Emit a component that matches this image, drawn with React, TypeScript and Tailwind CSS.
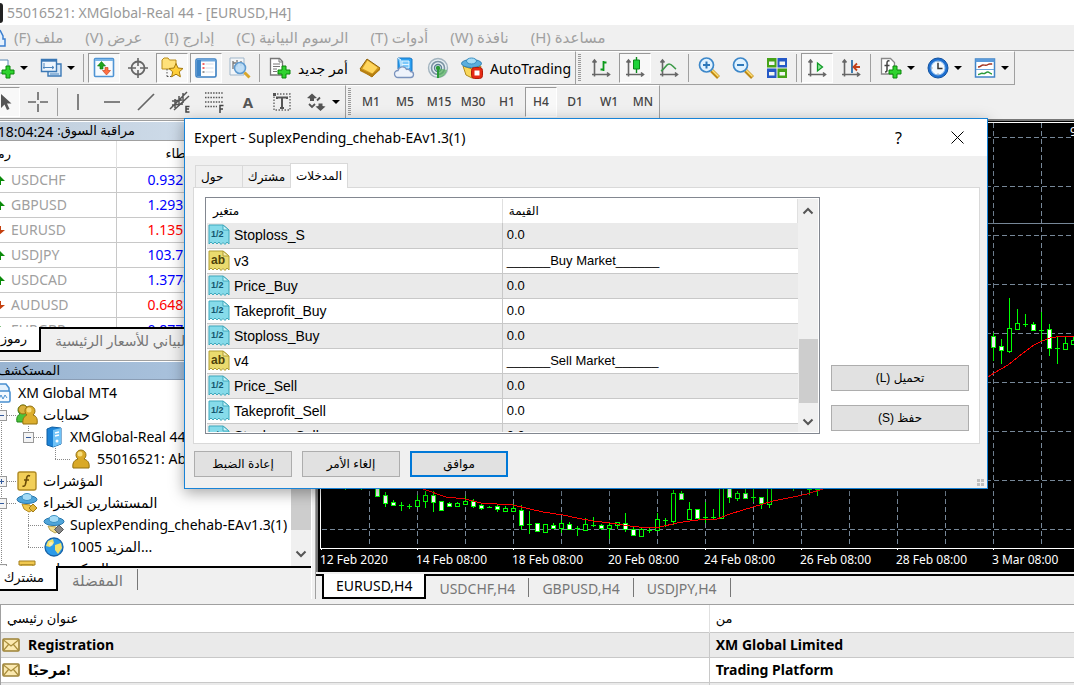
import type { ReactNode } from "react";
import clsx from "clsx";

const ui = "font-['Noto_Sans','DejaVu_Sans',sans-serif]";
const sans = "font-['Liberation_Sans','DejaVu_Sans',sans-serif]";

/* ---------- icons ---------- */

function Svg({ children, size = 22 }: { children: ReactNode; size?: number }) {
  return (
    <svg width={size} height={size} viewBox="0 0 22 22" fill="none" className="shrink-0" aria-hidden>
      {children}
    </svg>
  );
}

const greenPlus = (
  <path d="M13 9h4v4h4v4h-4v4h-4v-4H9v-4h4z" fill="#2fd32f" stroke="#0b860b" />
);

const axes = (
  <path d="M4.500 3v16.500M2 17.500h17M2.500 5.500l2-2.500 2 2.500M17 15.500l2.500 2-2.500 2" stroke="#666" strokeWidth="1.600" />
);

const icons = {
  newChart: (
    <Svg>
      <path d="M1 3h14v13H1z" fill="#fff" stroke="#5b89b5" />
      {greenPlus}
    </Svg>
  ),
  windows: (
    <Svg>
      <path d="M8 7h13v12H8z" fill="#d7e8f8" stroke="#3b78b5" strokeWidth="1.400" />
      <path d="M1.500 2.500h15v12h-15z" fill="#eef6fe" stroke="#3b78b5" strokeWidth="1.400" />
      <path d="M1.500 3.500h15" stroke="#3b78b5" strokeWidth="2.400" />
      <path d="M4 6v6M3 10.500h11M12 9l2 1.500-2 1.500M10 17h9" stroke="#4e86bd" />
    </Svg>
  ),
  market: (
    <Svg>
      <rect x="1.500" y="1.500" width="19" height="18" rx="1" fill="#f7fbff" stroke="#4f94d4" strokeWidth="1.600" />
      <path d="M2 3h18" stroke="#7bb6e8" strokeWidth="2" />
      <path d="M8.500 4.500l4 4.500h-2.500v3H7V9H4.500z" fill="#1fa41f" stroke="#0b7a0b" strokeWidth=".6" />
      <path d="M13.500 18l-4-4.500H12v-3h3v3h2.500z" fill="#ff7044" stroke="#c23b12" strokeWidth=".6" />
    </Svg>
  ),
  crosshair: (
    <Svg>
      <circle cx="11" cy="11" r="6.500" stroke="#666" strokeWidth="1.800" />
      <path d="M11 1v8M11 13v8M1 11h8M13 11h8" stroke="#666" strokeWidth="1.600" />
    </Svg>
  ),
  favorites: (
    <Svg>
      <path d="M1 3l2-2h4l1.500 2H15v9H1z" fill="#ffe17a" stroke="#b88c1a" />
      <path d="M6 12v8M6 19.500h5" stroke="#555" strokeDasharray="1.500 1.500" />
      <path d="M15 6.500l2 4.500 5 .5-3.700 3.300 1.100 5-4.400-2.600-4.400 2.600 1.100-5L8 11.500l5-.5z" fill="#ffcf3a" stroke="#a67a0c" />
    </Svg>
  ),
  terminal: (
    <Svg>
      <rect x="1" y="2" width="20" height="18" rx="1.500" fill="#fff" stroke="#3a7fc2" strokeWidth="1.600" />
      <path d="M1.500 3.500h19" stroke="#6fa9de" strokeWidth="2" />
      <path d="M4 3v16" stroke="#3f86c8" strokeWidth="4" />
      <path d="M7.500 7h2M7.500 11h2" stroke="#e33" strokeWidth="1.400" />
      <path d="M10.500 7h8M10.500 11h8M10.500 15h8" stroke="#d2dbe8" />
      <path d="M7.500 15h2" stroke="#333" />
    </Svg>
  ),
  tester: (
    <Svg>
      <path d="M1 1h14v17H1z" fill="#f4f6f8" stroke="#9fb6ca" />
      <path d="M4 4v8M4 6h3M8 3v7M12 4v5" stroke="#777" strokeWidth="1.300" />
      <circle cx="11" cy="11" r="5.500" fill="#b9dcf6" fillOpacity=".9" stroke="#5f9bd0" strokeWidth="1.600" />
      <path d="M15.500 15.500l5 5" stroke="#d9a62a" strokeWidth="3" />
    </Svg>
  ),
  order: (
    <Svg>
      <path d="M1.500 1.500h9l3 3V18h-12z" fill="#fff" stroke="#777" strokeWidth="1.300" />
      <path d="M10 1.500v3.500h3.500M4 7h7M4 9.500h7M4 12h4M4 14.500h4" stroke="#777" />
      {greenPlus}
    </Svg>
  ),
  gold: (
    <Svg>
      <path d="M1 12L8 2l13 9-8 9z" fill="#d29a1c" stroke="#8f620a" />
      <path d="M3.500 11.500L8.500 3.500 18.500 10.500l-5 6z" fill="#ffd65e" />
      <path d="M1 12l12 5 8-6v2l-8 7-12-6z" fill="#b67f12" />
    </Svg>
  ),
  cloud: (
    <Svg>
      <path d="M5 1h12l2 1v12H7l-2-2z" fill="#2ba0f2" stroke="#1676c4" />
      <path d="M9 4h7v7H9zM5 1l3 2v9" fill="#7cc8fb" stroke="#e4f5ff" />
      <path d="M9 7.500h7" stroke="#e4f5ff" />
      <path d="M5 20.500a3.500 3.500 0 010-7 4.500 4.500 0 018.500-1 3 3 0 014 2 3 3 0 010 6z" fill="#eef3fb" stroke="#7a93bd" strokeWidth="1.300" />
    </Svg>
  ),
  signal: (
    <Svg>
      <circle cx="11" cy="11" r="9.500" fill="#e6eef2" stroke="#a3b4bf" strokeWidth="1.400" />
      <circle cx="11" cy="11" r="6.500" stroke="#7c94a3" strokeWidth="1.600" />
      <circle cx="11" cy="11" r="3.500" stroke="#5c7f95" strokeWidth="1.400" />
      <path d="M11 11v10a10 10 0 009-8z" fill="#53b25a" fillOpacity=".7" />
      <circle cx="11" cy="11" r="2.200" fill="#2a9a38" />
      <path d="M11 11v10" stroke="#2a9a38" strokeWidth="2" />
    </Svg>
  ),
  auto: (
    <Svg>
      <path d="M2 9l9 3 9-3-3 10-6 2-6-3z" fill="#f9d75a" stroke="#b18a1c" />
      <ellipse cx="10.500" cy="6.500" rx="10" ry="4" fill="#5aaede" stroke="#2d7fb3" />
      <ellipse cx="10.500" cy="4" rx="5" ry="3" fill="#a5dcf7" stroke="#3a8fc2" />
      <rect x="10.500" y="10.500" width="11" height="11" rx="3" fill="#e52a14" stroke="#b01c0a" />
      <path d="M13.500 13.500h5v5h-5z" fill="#fff" />
    </Svg>
  ),
  bars: (
    <Svg>
      {axes}
      <path d="M13.500 4v10M10.500 12.500h3M13.500 5.500h3" stroke="#0a9a1a" strokeWidth="1.800" />
    </Svg>
  ),
  candles: (
    <Svg>
      {axes}
      <path d="M12.500 0v16" stroke="#0a8a1a" strokeWidth="1.400" />
      <path d="M9.500 3h6v9h-6z" fill="#1fd33a" stroke="#0a8a1a" />
    </Svg>
  ),
  line: (
    <Svg>
      {axes}
      <path d="M3 14c4-2 5-7 8-7s4 3 7 5" stroke="#3c9a48" strokeWidth="1.600" />
    </Svg>
  ),
  zoomIn: (
    <Svg>
      <path d="M13.500 13.500l7 7" stroke="#c08b16" strokeWidth="4" />
      <path d="M14 13l6.500 6.500" stroke="#ffe07a" strokeWidth="1.600" />
      <circle cx="8.500" cy="8" r="7" fill="#e0f2ff" stroke="#3c87c9" strokeWidth="1.700" />
      <path d="M8.500 4.500v7M5 8h7" stroke="#2d78ba" strokeWidth="2" />
    </Svg>
  ),
  zoomOut: (
    <Svg>
      <path d="M13.500 13.500l7 7" stroke="#c08b16" strokeWidth="4" />
      <path d="M14 13l6.500 6.500" stroke="#ffe07a" strokeWidth="1.600" />
      <circle cx="8.500" cy="8" r="7" fill="#e0f2ff" stroke="#3c87c9" strokeWidth="1.700" />
      <path d="M5 8h7" stroke="#2d78ba" strokeWidth="2" />
    </Svg>
  ),
  tile: (
    <Svg>
      <path d="M1 1h9.500v9.500H1zM11.500 11.500H21V21h-9.500z" fill="#46a318" />
      <path d="M11.500 1H21v9.500h-9.500zM1 11.500h9.500V21H1z" fill="#2559c7" />
      <path d="M3 4.500h5.500V8H3zM13.500 4.500H19V8h-5.500zM3 15h5.500v3.500H3zM13.500 15H19v3.500h-5.500z" fill="#f2f6f2" />
    </Svg>
  ),
  scroll: (
    <Svg>
      {axes}
      <path d="M11.500 6v8l5-4z" fill="#8de89a" stroke="#109a26" strokeWidth="1.300" />
    </Svg>
  ),
  shift: (
    <Svg>
      {axes}
      <path d="M12 3v13" stroke="#2b6ea8" strokeWidth="1.800" />
      <path d="M20 10h-6M17 6.500L13.500 10l3.500 3.500" stroke="#c2401a" strokeWidth="1.800" />
    </Svg>
  ),
  indicator: (
    <Svg>
      <path d="M1.500 1.500h9l4 4V17h-13z" fill="#fff" stroke="#888" strokeWidth="1.300" />
      <path d="M9.500 4c-2-.5-2.500.5-2.500 2v7c0 1.500-.5 2-2 2M4.500 8.500h5" stroke="#444" strokeWidth="1.500" />
      {greenPlus}
    </Svg>
  ),
  clock: (
    <Svg>
      <circle cx="11" cy="11" r="10" fill="#1e6fd0" stroke="#12529f" />
      <circle cx="11" cy="11" r="7" fill="#f3f8fd" stroke="#8bbdf0" />
      <path d="M11 6v5.500h4.500" stroke="#333" strokeWidth="1.500" />
      <path d="M11 4.500v1M11 16.500v1M4.500 11h1" stroke="#777" />
    </Svg>
  ),
  template: (
    <Svg>
      <rect x="1.500" y="2" width="19" height="18" fill="#fff" stroke="#4285c7" strokeWidth="1.500" />
      <path d="M1.500 3.500h19" stroke="#5b9bdb" strokeWidth="3" />
      <path d="M2 12.500h18" stroke="#6da5dd" />
      <path d="M4 10c3 0 3-2 5-2s3 1 5-.5 3 .5 4-1" stroke="#a33420" strokeWidth="1.400" />
      <path d="M4 17.500c2 0 3-2 5-1s3-2 5-1.500 2 2 4 2" stroke="#2b9a3c" strokeWidth="1.400" />
    </Svg>
  ),
  cursor: (
    <Svg>
      <path d="M8 3v14l3.500-3.500L14 19l2.500-1-2.500-5.500h4.500z" fill="#555" />
    </Svg>
  ),
  cross: (
    <Svg>
      <path d="M11 1v8M11 13v8M1 11h8M13 11h8" stroke="#666" strokeWidth="1.600" />
    </Svg>
  ),
  vline: (
    <Svg>
      <path d="M11 3v16" stroke="#666" strokeWidth="1.600" />
    </Svg>
  ),
  hline: (
    <Svg>
      <path d="M3 11h16" stroke="#666" strokeWidth="1.600" />
    </Svg>
  ),
  trend: (
    <Svg>
      <path d="M3 19L19 3" stroke="#666" strokeWidth="1.700" />
    </Svg>
  ),
  channel: (
    <Svg>
      <path d="M1 18L18 1M5 19L20 5M3 10l10-1M3 14l11-1M6 8v9M10 5v10M14 2v10" stroke="#555" strokeWidth="1.500" />
      <path d="M20.500 15.500H17v5.500h3.500M17 18h3" stroke="#444" strokeWidth="1.500" />
    </Svg>
  ),
  fibo: (
    <Svg>
      <path d="M2 2h18M2 6.500h18M2 11h18M2 15.500h12" stroke="#555" strokeWidth="1.600" strokeDasharray="1.500 1.200" />
      <path d="M20.500 14.500H17V22M17 18h3" stroke="#444" strokeWidth="1.500" />
    </Svg>
  ),
  textLabel: (
    <Svg>
      <path d="M3 3h16v16H3z" stroke="#666" strokeWidth="1.400" strokeDasharray="1.500 1.500" />
      <path d="M6 8V6.500h10V8M11 7v10M9 17h4" stroke="#555" strokeWidth="2" />
      <path d="M2 2h3v3H2z" fill="#555" />
    </Svg>
  ),
  arrows: (
    <Svg>
      <path d="M7 2.500l5 4.500-3 .5v2.500H5V7.500L2 7zM15.500 20l-5-4.500 3-.5v-2.500h4V15l3 .5z" fill="#555" />
      <path d="M4 13l3 3 3-3M12 9.500l3-3" stroke="#555" strokeWidth="1.800" />
    </Svg>
  ),
  person: (
    <Svg>
      <path d="M3 20c-1-6 2-8 5-9a5 5 0 116 0c3 1 6 3 5 9z" fill="#d9a928" stroke="#92700f" />
      <circle cx="10" cy="6" r="2.500" fill="#f6dc7a" />
    </Svg>
  ),
  people: (
    <Svg>
      <path d="M1 18c-1-5 1-7 3-8a5 5 0 116 0c3 1 4 3 4 8z" fill="#4bc23a" stroke="#21851a" />
      <circle cx="7" cy="5.500" r="4.500" fill="#d9b13d" stroke="#92700f" />
      <path d="M7 20c-1-6 2-8 4-9a5 5 0 116 0c3 1 5 3 4 9z" fill="#dcae2e" stroke="#92700f" />
      <circle cx="13" cy="6" r="2.500" fill="#f6dc7a" />
    </Svg>
  ),
  server: (
    <Svg>
      <path d="M4 3l5-2 9 1v16l-8 3-6-2z" fill="#1d83d6" stroke="#0f5fa3" />
      <path d="M10 4l8-2v16l-8 3z" fill="#6fc2f7" />
      <path d="M12 7l4-1M12 10l4-1" stroke="#fff" strokeWidth="1.500" />
      <circle cx="14" cy="15" r="1.500" fill="#fff" />
    </Svg>
  ),
  func: (
    <Svg>
      <rect x="2" y="2" width="18" height="18" rx="2" fill="#f2cf58" stroke="#b08a22" strokeWidth="1.400" />
      <path d="M14 6c-2-1-3 0-3.300 2L9.500 14c-.3 2-1.500 2.500-3 2M8 10h5" stroke="#6b4c07" strokeWidth="1.600" />
    </Svg>
  ),
  expert: (
    <Svg>
      <path d="M6 12l8 1 3 5-4 2-5-3z" fill="#f1c84c" stroke="#b58b20" />
      <path d="M17 12l4 4-4 4-4-4z" fill="#e3b93c" stroke="#a37c14" />
      <ellipse cx="11" cy="7.500" rx="10" ry="4" fill="#4fa5da" stroke="#2a78ad" />
      <ellipse cx="11" cy="5" rx="5" ry="3.500" fill="#a5dcf7" stroke="#3a8fc2" />
    </Svg>
  ),
  expertOff: (
    <Svg>
      <path d="M5 12l8 1 3 4-4 2-5-3z" fill="#f1dc8c" stroke="#b5a050" />
      <path d="M16 11l4.500 4.500L16 20l-4.500-4.500z" fill="#858585" stroke="#555" />
      <ellipse cx="11" cy="7.500" rx="10" ry="4" fill="#4fa5da" stroke="#2a78ad" />
      <ellipse cx="11" cy="5" rx="5" ry="3.500" fill="#a5dcf7" stroke="#3a8fc2" />
    </Svg>
  ),
  globe: (
    <Svg>
      <circle cx="11" cy="11" r="9" fill="#2d9be8" stroke="#1763a8" strokeWidth="1.300" />
      <path d="M5 5l5-2 1 4-4 4-4-1zM12 9l6-2 1 5-4 6-3-4z" fill="#f5e26a" />
      <circle cx="8" cy="8" r="2" fill="#fff" fillOpacity=".5" />
    </Svg>
  ),
  script: (
    <Svg>
      <path d="M3 3h16v4H3z" fill="#f0c850" stroke="#a37f1d" />
      <path d="M5 7h12v13H5z" fill="#f8e08a" stroke="#a37f1d" />
    </Svg>
  ),
  platform: (
    <Svg>
      <path d="M5 6V2h11l3 4v6" stroke="#4a90d0" strokeWidth="1.600" fill="#e4f1fc" />
      <rect x="2" y="9" width="18" height="11" rx="1.500" fill="#f4faff" stroke="#4a90d0" strokeWidth="1.600" />
      <path d="M5 17l2-4 2 4 2-4 2 4 2-4 2 3" stroke="#4a90d0" />
    </Svg>
  ),
  mail: (
    <svg width="18" height="14" viewBox="0 0 18 14" fill="none" aria-hidden>
      <rect x="1" y="1" width="16" height="12" rx="1" fill="#fbe9b0" stroke="#9c8136" strokeWidth="1.600" />
      <path d="M1.500 2l7.500 6 7.500-6M1.500 12.500l5-6M16.500 12.500l-5-6" stroke="#a98e3c" strokeWidth="1.200" />
    </svg>
  ),
};

function ParamIcon({ kind }: { kind: "num" | "str" }) {
  const num = kind === "num";
  return (
    <span className="relative block h-[22px] w-[22px]">
      <svg width="22" height="22" viewBox="0 0 22 22" aria-hidden>
        <path
          d="M1 1h14l6 5v14l-2-2-2 2.500-2-2-2 2-2-2.500-2 2-2-2-2 2-2-2-2 2z"
          fill={num ? "#86dbea" : "#eadb6e"}
          stroke={num ? "#3fa9bd" : "#b09e34"}
        />
        <path d="M15 1v5h6z" fill={num ? "#c9f1f8" : "#f7eeb0"} stroke={num ? "#3fa9bd" : "#b09e34"} />
      </svg>
      <span
        className={clsx(
          "absolute top-0 left-[3px] leading-5",
          sans,
          num ? "text-[9px] font-bold text-[#14566e]" : "text-[12px] font-bold text-[#4f430b]"
        )}
      >
        {num ? "1/2" : "ab"}
      </span>
    </span>
  );
}

function Chevron({ up }: { up?: boolean }) {
  return (
    <svg width="12" height="8" viewBox="0 0 12 8" fill="none" aria-hidden>
      <path d={up ? "M1.500 6.500L6 2l4.500 4.500" : "M1.500 1.500L6 6l4.500-4.500"} stroke="#555" strokeWidth="2" />
    </svg>
  );
}

/* ---------- toolbars ---------- */

type ToolProps = { label: string; pressed?: boolean; drop?: boolean; text?: string; children?: ReactNode };

function Tool({ label, pressed, drop, text, children }: ToolProps) {
  return (
    <button
      aria-label={label}
      aria-pressed={pressed}
      className={clsx(
        "flex h-[30px] shrink-0 items-center border",
        pressed ? "border-t-[#999] border-r-white border-b-white border-l-[#999] bg-[#f8f8f8]" : "border-transparent"
      )}
    >
      <span className="flex w-[30px] shrink-0 items-center justify-center">{children}</span>
      {text && <span className="px-[3px] text-[14px] whitespace-nowrap text-black">{text}</span>}
      {drop && <span className="mr-1 ml-px border-x-4 border-t-4 border-x-transparent border-t-black" />}
    </button>
  );
}

const Sep = () => <span className="mr-0.5 ml-px h-7 w-px shrink-0 bg-[#a0a0a0]" />;

const Grip = () => (
  <span className="mr-0.5 h-7 w-[3px] shrink-0 bg-[repeating-linear-gradient(#9a9a9a_0_1px,#f0f0f0_1px_2px)]" />
);

function Strip({ children, className }: { children: ReactNode; className?: string }) {
  return (
    <div
      className={clsx(
        "flex h-[34px] shrink-0 items-center gap-0.5 border-t border-r border-b border-t-white border-r-[#a0a0a0] border-b-[#a0a0a0]",
        className
      )}
    >
      {children}
    </div>
  );
}

const menus = [
  "ملف (F)",
  "عرض (V)",
  "إدارج (I)",
  "الرسوم البيانية (C)",
  "أدوات (T)",
  "نافذة (W)",
  "مساعدة (H)",
];

const periods = ["M1", "M5", "M15", "M30", "H1", "H4", "D1", "W1", "MN"];

function Toolbars() {
  return (
    <>
      <div className="flex shrink-0 overflow-hidden border-t border-[#a0a0a0]">
        <Strip className="-ml-3">
          <Tool label="New chart" drop>{icons.newChart}</Tool>
          <Tool label="Profiles" drop>{icons.windows}</Tool>
          <Sep />
          <Tool label="Market watch" pressed>{icons.market}</Tool>
          <Tool label="Data window">{icons.crosshair}</Tool>
          <Tool label="Navigator" pressed>{icons.favorites}</Tool>
          <Tool label="Terminal" pressed>{icons.terminal}</Tool>
          <Tool label="Strategy tester">{icons.tester}</Tool>
          <Sep />
          <Tool label="أمر جديد" text="أمر جديد">{icons.order}</Tool>
          <Tool label="Editor">{icons.gold}</Tool>
          <Tool label="Hosting">{icons.cloud}</Tool>
          <Tool label="Signals">{icons.signal}</Tool>
          <Tool label="AutoTrading" text="AutoTrading">{icons.auto}</Tool>
        </Strip>
        <Strip className="pl-0.5">
          <Grip />
          <Tool label="Bar chart">{icons.bars}</Tool>
          <Tool label="Candlesticks" pressed>{icons.candles}</Tool>
          <Tool label="Line chart">{icons.line}</Tool>
          <Sep />
          <Tool label="Zoom in">{icons.zoomIn}</Tool>
          <Tool label="Zoom out">{icons.zoomOut}</Tool>
          <Tool label="Tile windows">{icons.tile}</Tool>
          <Sep />
          <Tool label="Auto scroll" pressed>{icons.scroll}</Tool>
          <Tool label="Chart shift">{icons.shift}</Tool>
          <Sep />
          <Tool label="Indicators" drop>{icons.indicator}</Tool>
          <Tool label="Periods" drop>{icons.clock}</Tool>
          <Tool label="Templates" drop>{icons.template}</Tool>
        </Strip>
      </div>
      <div className="flex shrink-0 overflow-hidden">
        <Strip className="-ml-3">
          <Tool label="Cursor" pressed>{icons.cursor}</Tool>
          <Tool label="Crosshair">{icons.cross}</Tool>
          <Sep />
          <Tool label="Vertical line">{icons.vline}</Tool>
          <Tool label="Horizontal line">{icons.hline}</Tool>
          <Tool label="Trendline">{icons.trend}</Tool>
          <Tool label="Channel">{icons.channel}</Tool>
          <Tool label="Fibonacci">{icons.fibo}</Tool>
          <Tool label="Text"><span className="text-[15px] font-bold text-[#555]">A</span></Tool>
          <Tool label="Text label">{icons.textLabel}</Tool>
          <Tool label="Arrows" drop>{icons.arrows}</Tool>
        </Strip>
        <Strip className="pl-0.5">
          <Grip />
          {periods.map((p) => (
            <Tool key={p} label={p} pressed={p === "H4"}>
              <span className="text-[12px] font-medium text-[#444]">{p}</span>
            </Tool>
          ))}
        </Strip>
      </div>
    </>
  );
}

/* ---------- left dock ---------- */

const quotes = [
  { symbol: "USDCHF", bid: "0.9326", up: true },
  { symbol: "GBPUSD", bid: "1.2935", up: true },
  { symbol: "EURUSD", bid: "1.1351", up: false },
  { symbol: "USDJPY", bid: "103.76", up: true },
  { symbol: "USDCAD", bid: "1.3774", up: true },
  { symbol: "AUDUSD", bid: "0.6482", up: false },
  { symbol: "EURGBP", bid: "0.8773", up: true },
];

function MarketWatch() {
  return (
    <section className="mt-px flex h-[238px] shrink-0 flex-col border-t border-[#a0a0a0]">
      <div className="flex h-5 items-center overflow-hidden border-y border-[#a0a0a0] border-t-white bg-linear-to-r from-[#bfcddb] to-[#d7e4f2]">
        <h2 dir="rtl" className="flex w-[135px] items-center gap-1 text-[13px] whitespace-nowrap text-black">
          <span>مراقبة السوق:</span>
          <span className="text-[14px]">18:04:24</span>
        </h2>
      </div>
      <div className="h-[186px] overflow-hidden bg-white">
        <table className="w-full table-fixed border-collapse text-left">
          <thead>
            <tr className="h-[26px] border-b border-[#c8c8c8] text-[13px]">
              <th className="w-[116px] border-r border-[#e0e0e0] font-normal">
                <span dir="rtl" className="flex w-[11px] whitespace-nowrap">رمز</span>
              </th>
              <th className="pl-[49px] font-normal">عطاء</th>
            </tr>
          </thead>
          <tbody>
            {quotes.map((q) => (
              <tr key={q.symbol} className="h-[25px] border-b border-[#c8c8c8] text-[14px] leading-5">
                <td className="border-r border-[#c8c8c8] p-0 text-[#a0a0a0]">
                  <span className="flex items-center gap-[6px]">
                    <svg width="5" height="12" viewBox="0 0 5 12" aria-hidden>
                      {q.up ? (
                        <path d="M-1 1l6 6H1v4h-2z" fill="#0a8a0a" />
                      ) : (
                        <path d="M-1 11l6-5H1V2h-2z" fill="#c4400f" />
                      )}
                    </svg>
                    {q.symbol}
                  </span>
                </td>
                <td className={clsx("p-0 pl-[31px]", q.up ? "text-[#0000ff]" : "text-[#ff0000]")}>{q.bid}</td>
              </tr>
            ))}
          </tbody>
        </table>
      </div>
      <div className="flex h-[25px] border-t-2 border-black" role="tablist">
        <button role="tab" aria-selected className="-mt-0.5 flex w-[41px] items-center justify-end border-r-2 border-b-2 border-black bg-white pr-3 text-[13px] whitespace-nowrap">
          رموز
        </button>
        <button role="tab" className="min-w-0 flex-1 overflow-hidden pl-[14px] text-left text-[14px] whitespace-nowrap text-[#777]">
          الرسم البياني للأسعار الرئيسية
        </button>
      </div>
    </section>
  );
}

function Guide({ level, toggle, down }: { level: number; toggle?: "+" | "-"; down?: boolean }) {
  const widths = [0, 16, 43, 70];
  const w = widths[level];
  const x = w - 15;
  return (
    <svg width={w} height="22" className="shrink-0 overflow-hidden" fill="none" aria-hidden>
      <path d={`M${x + 0.5} 0V${down ? 22 : 11}M${x} 11.500h15`} stroke="#888" strokeDasharray="1 1" />
      {level > 1 && <path d="M1.500 0v22" stroke="#888" strokeDasharray="1 1" />}
      {toggle && (
        <>
          <rect x={x - 4.5} y="6.500" width="10" height="10" fill="#f4f4f4" stroke="#999" />
          <path d={`M${x - 2} 11.500h5${toggle === "+" ? `M${x + 0.5} 9v5` : ""}`} stroke="#335a9c" />
        </>
      )}
    </svg>
  );
}

const tree = [
  { level: 1, icon: icons.people, text: "حسابات", toggle: "-" as const, down: true },
  { level: 2, icon: icons.server, text: "XMGlobal-Real 44", toggle: "-" as const },
  { level: 3, icon: icons.person, text: "55016521: Abdo" },
  { level: 1, icon: icons.func, text: "المؤشرات", toggle: "+" as const, down: true },
  { level: 1, icon: icons.expert, text: "المستشارين الخبراء", toggle: "-" as const, down: true },
  { level: 2, icon: icons.expertOff, text: "SuplexPending_chehab-EAv1.3(1)", down: true },
  { level: 2, icon: icons.globe, text: "1005 المزيد..." },
  { level: 1, icon: icons.script, text: "السكريبتات", toggle: "+" as const },
];

function Navigator() {
  return (
    <section className="mt-0.5 flex h-[237px] shrink-0 flex-col border-t border-[#a0a0a0]">
      <div className="flex h-[19px] items-center overflow-hidden border-y border-t-white border-b-[#8a9db5] bg-linear-to-r from-[#99b4d1] to-[#b4cbe4]">
        <h2 dir="rtl" className="flex w-[60px] text-[13px] whitespace-nowrap text-black">المستكشف</h2>
      </div>
      <div className="flex h-[186px] overflow-hidden bg-white">
        <ul className="min-w-0 flex-1 overflow-hidden pt-0.5 text-[14px] leading-[22px] whitespace-nowrap">
          <li className="flex h-[22px] items-center gap-[6px]">
            <span className="-ml-[10px]">{icons.platform}</span>XM Global MT4
          </li>
          {tree.map((n) => (
            <li key={n.text} className="flex h-[22px] items-center">
              <Guide level={n.level} toggle={n.toggle} down={n.down} />
              {n.icon}
              <span className="pl-[5px]">{n.text}</span>
            </li>
          ))}
        </ul>
        <div className="flex w-5 flex-col items-center justify-end bg-[#f0f0f0]">
          <span className="w-full flex-1 bg-[#cdcdcd]" />
          <span className="flex h-9 items-end pb-2"><Chevron /></span>
        </div>
      </div>
      <div className="flex h-[25px] border-t-2 border-black" role="tablist">
        <button role="tab" aria-selected className="-mt-0.5 flex w-[58px] items-center justify-end border-r-2 border-b-2 border-black bg-white pr-3 text-[13px] whitespace-nowrap">
          مشترك
        </button>
        <button role="tab" className="my-px border-r border-[#777] pr-[14px] pl-[14px] text-[15px] whitespace-nowrap text-[#777]">
          المفضلة
        </button>
      </div>
    </section>
  );
}

/* ---------- chart ---------- */

// x, high, low, body top, body bottom, kind (w filled, g hollow, d doji)
type Candle = [number, number, number, number, number, "w" | "g" | "d"];

const candles: Candle[] = [
  [345, 480, 490, 480, 486, "g"], [361, 480, 490, 480, 486, "w"],
  [377, 480, 496, 482, 496, "w"], [385, 492, 507, 495, 503, "w"], [393, 500, 506, 502, 505, "w"],
  [401, 502, 511, 505, 505, "d"], [409, 504, 509, 506, 506, "d"], [417, 495, 507, 500, 506, "g"],
  [425, 491, 508, 495, 501, "g"], [433, 491, 512, 495, 502, "w"], [441, 501, 510, 501, 510, "w"],
  [449, 502, 507, 503, 506, "w"], [457, 502, 506, 503, 506, "g"], [465, 496, 505, 501, 504, "g"],
  [473, 499, 508, 501, 506, "w"], [481, 503, 510, 505, 508, "w"], [489, 506, 508, 507, 507, "d"],
  [497, 504, 512, 506, 509, "w"], [505, 506, 512, 508, 511, "g"], [513, 504, 512, 508, 511, "g"],
  [521, 505, 530, 510, 525, "w"], [529, 511, 534, 524, 524, "d"], [537, 523, 531, 523, 531, "w"],
  [545, 524, 532, 524, 532, "g"], [553, 523, 529, 525, 528, "w"], [561, 520, 533, 523, 528, "g"],
  [569, 522, 529, 524, 529, "w"], [577, 526, 536, 528, 528, "d"], [585, 518, 531, 524, 530, "g"],
  [593, 517, 527, 525, 525, "d"], [601, 524, 530, 525, 528, "w"], [609, 523, 539, 525, 528, "g"],
  [617, 522, 529, 522, 525, "g"], [625, 513, 532, 523, 529, "w"], [633, 527, 535, 529, 535, "w"],
  [641, 528, 536, 529, 536, "g"], [649, 528, 533, 530, 530, "d"], [657, 513, 531, 519, 530, "g"],
  [665, 518, 527, 520, 520, "d"], [673, 490, 525, 493, 521, "g"], [681, 491, 500, 493, 499, "w"],
  [689, 502, 519, 509, 519, "g"], [697, 509, 518, 509, 518, "w"], [705, 502, 523, 517, 517, "d"],
  [713, 509, 519, 517, 517, "d"], [721, 480, 518, 480, 518, "g"], [729, 480, 503, 484, 497, "w"],
  [737, 491, 501, 493, 498, "g"], [745, 488, 498, 493, 498, "w"], [753, 487, 502, 497, 497, "d"],
  [761, 497, 509, 497, 503, "w"], [769, 480, 508, 484, 504, "g"], [793, 480, 491, 484, 484, "d"],
  [809, 480, 495, 489, 489, "d"], [817, 480, 496, 489, 489, "d"],
  [993, 333, 361, 336, 347, "w"], [1001, 339, 364, 346, 350, "w"], [1009, 298, 353, 328, 351, "g"],
  [1017, 309, 329, 323, 329, "g"], [1025, 314, 327, 324, 324, "d"], [1033, 322, 331, 324, 330, "w"],
  [1041, 312, 341, 330, 330, "d"], [1049, 324, 356, 329, 348, "w"], [1057, 336, 364, 348, 348, "d"],
  [1065, 337, 349, 343, 349, "g"], [1073, 337, 345, 340, 344, "g"],
];

const average =
  "M423 489l23 8 19 2 16 4 32 2 17 4 13 3 20 3 14 3 16 3 17 2 20 3 17 2 13-1 17-4 13-2 17-2h10l13-5 23-7 20-6 20-4 14-3 16-5L988 377l6-4 14-8 10-8 16-12 8-4 8-3 12-2 12 1";

const gridX = Array.from({ length: 15 }, (_, i) => 369 + i * 48);
const gridY = Array.from({ length: 9 }, (_, i) => 137 + i * 49);
const dates = [
  "12 Feb 2020", "14 Feb 08:00", "18 Feb 08:00", "20 Feb 08:00",
  "24 Feb 08:00", "26 Feb 08:00", "28 Feb 08:00", "3 Mar 08:00",
];
const chartTabs = ["EURUSD,H4", "USDCHF,H4", "GBPUSD,H4", "USDJPY,H4"];

function Chart() {
  return (
    <section className="flex min-w-0 flex-1 flex-col">
      <div className="flex h-[453px] flex-col border-t-2 border-l-2 border-[#777] bg-black">
        <svg width="100%" height="429" className="block" fill="none" shapeRendering="crispEdges" aria-label="EURUSD,H4">
          <g transform="translate(-318 -121)">
            {gridX.map((x) => (
              <path key={x} d={`M${x + 0.5} 123V547`} stroke="#778899" strokeDasharray="5 3" />
            ))}
            {gridY.map((y) => (
              <path key={y} d={`M322 ${y + 0.5}H2400`} stroke="#778899" strokeDasharray="5 3" />
            ))}
            <path d="M320.500 122.500H2400M320.500 122v426M320 548.500H2400" stroke="#fff" />
            <path d="M321 223.500H2400" stroke="#778899" />
            {dates.map((d, i) => (
              <path key={d} d={`M${321.5 + i * 96} 549v3`} stroke="#fff" />
            ))}
            {candles.map(([x, hi, lo, top, bot, kind]) => (
              <g key={x} stroke="#00ff00">
                <path d={`M${x + 0.5} ${hi}V${lo}`} />
                {kind === "d" ? (
                  <path d={`M${x - 2} ${top + 0.5}h5`} />
                ) : (
                  <rect x={x - 1.5} y={top + 0.5} width="4" height={bot - top} fill={kind === "w" ? "#fff" : "#000"} />
                )}
              </g>
            ))}
            <path d={average} stroke="#ff0000" />
            <text x="1070" y="136" fill="#fff" fontSize="12">9</text>
          </g>
        </svg>
        <div className="flex overflow-hidden pl-0.5 text-[12px] leading-5 whitespace-nowrap text-white">
          {dates.map((d) => (
            <span key={d} className="w-24 shrink-0">{d}</span>
          ))}
        </div>
      </div>
      <div className="mt-0.5 flex h-[25px] border-t-2 border-black pl-[6px] text-[14px]" role="tablist">
        {chartTabs.map((t, i) => (
          <button
            key={t}
            role="tab"
            aria-selected={i === 0}
            className={
              i === 0
                ? "-mt-0.5 border-x-2 border-b-2 border-black bg-white px-3 text-black"
                : "my-0.5 border-r border-[#777] px-[13px] text-[#777]"
            }
          >
            {t}
          </button>
        ))}
      </div>
    </section>
  );
}

/* ---------- mailbox ---------- */

const mails = [
  { subject: "Registration", from: "XM Global Limited" },
  { subject: "مرحبًا!", from: "Trading Platform" },
  { subject: "", from: "" },
];

function Mailbox() {
  return (
    <section className="mt-[5px] shrink-0 border-t border-l border-[#a0a0a0] bg-white">
      <table className="w-full table-fixed border-collapse text-left">
        <thead>
          <tr className="h-[27px] border-b border-[#c8c8c8] text-[13px]">
            <th className="w-[66%] border-r border-[#e0e0e0] p-0 pl-[6px] font-normal">عنوان رئيسي</th>
            <th className="p-0 pl-[6px] font-normal">من</th>
          </tr>
        </thead>
        <tbody>
          {mails.map((m, i) => (
            <tr key={i} className={clsx("h-[25px] border-b border-[#c8c8c8] text-[14px] leading-5 font-bold", i % 2 === 0 && "bg-[#eaeaea]")}>
              <td className="border-r border-[#c8c8c8] p-0">
                <span className="flex items-center gap-2 pl-px">
                  {m.subject && icons.mail}
                  {m.subject}
                </span>
              </td>
              <td className="p-0 pl-[6px]">{m.from}</td>
            </tr>
          ))}
        </tbody>
      </table>
    </section>
  );
}

/* ---------- dialog ---------- */

const params: { kind: "num" | "str"; name: string; value: string }[] = [
  { kind: "num", name: "Stoploss_S", value: "0.0" },
  { kind: "str", name: "v3", value: "______Buy Market______" },
  { kind: "num", name: "Price_Buy", value: "0.0" },
  { kind: "num", name: "Takeprofit_Buy", value: "0.0" },
  { kind: "num", name: "Stoploss_Buy", value: "0.0" },
  { kind: "str", name: "v4", value: "______Sell Market______" },
  { kind: "num", name: "Price_Sell", value: "0.0" },
  { kind: "num", name: "Takeprofit_Sell", value: "0.0" },
  { kind: "num", name: "Stoploss_Sell", value: "0.0" },
];

function Push({ children, primary, wide }: { children: ReactNode; primary?: boolean; wide?: boolean }) {
  return (
    <button
      dir="rtl"
      className={clsx(
        "h-[26px] bg-[#e1e1e1] text-[12px] text-black",
        wide ? "w-[138px]" : "w-[98px]",
        primary ? "border-2 border-[#0078d7]" : "border border-[#adadad]"
      )}
    >
      {children}
    </button>
  );
}

function ExpertDialog() {
  return (
    <div
      role="dialog"
      aria-label="Expert"
      className="absolute top-[118px] left-[184px] flex h-[371px] w-[804px] flex-col border border-[#1883d7] bg-[#f0f0f0] shadow-[0_4px_14px_rgba(0,0,0,0.35)]"
    >
      <header className="flex h-[37px] items-center bg-white pl-[9px]">
        <h1 className="flex-1 text-[14px] text-black">Expert - SuplexPending_chehab-EAv1.3(1)</h1>
        <button aria-label="Help" className="w-[57px] text-[16px] text-black">?</button>
        <button aria-label="Close" className="flex w-[60px] justify-center">
          <svg width="13" height="13" viewBox="0 0 13 13" aria-hidden>
            <path d="M.5.5l12 12M12.500.5l-12 12" stroke="#000" />
          </svg>
        </button>
      </header>
      <div className={clsx("flex flex-1 flex-col px-2 pt-[7px] text-[12px]", sans)}>
        <div className="flex items-end pl-0.5" role="tablist">
          <button role="tab" className="h-[22px] w-12 border border-b-0 border-[#d9d9d9] pl-[5px] text-left">حول</button>
          <button role="tab" className="h-[22px] w-[47px] border-t border-[#d9d9d9] text-center">مشترك</button>
          <button role="tab" aria-selected className="relative -mb-px h-[25px] w-[58px] border border-b-0 border-[#d9d9d9] bg-white text-center">
            المدخلات
          </button>
        </div>
        <div className="-mr-px flex h-[257px] gap-[11px] border border-[#d9d9d9] bg-white py-[9px] pr-[10px] pl-[11px]">
          <div className="flex min-w-0 flex-1 overflow-hidden border border-[#828790] p-px">
            <div className="min-w-0 flex-1 overflow-hidden">
              <table className="w-full table-fixed border-collapse text-left text-[13px] leading-5">
                <thead>
                  <tr className="h-6 text-[12px]">
                    <th className="w-1/2 border-r border-[#e0e0e0] p-0 pl-[6px] font-normal">متغير</th>
                    <th className="border-r border-[#e0e0e0] p-0 pl-[6px] font-normal">القيمة</th>
                  </tr>
                </thead>
                <tbody>
                  {params.map((p, i) => (
                    <tr key={p.name} className={clsx("h-[25px] border-b border-[#c8c8c8]", i % 2 === 0 && "bg-[#eaeaea]")}>
                      <td className="border-r border-[#c8c8c8] p-0">
                        <span className="flex items-center gap-1 pl-px text-[14px]"><ParamIcon kind={p.kind} />{p.name}</span>
                      </td>
                      <td className="p-0 pl-1">{p.value}</td>
                    </tr>
                  ))}
                </tbody>
              </table>
            </div>
            <div className="flex w-5 flex-col items-center bg-[#f0f0f0]">
              <span className="flex flex-1 items-start pt-2"><Chevron up /></span>
              <span className="h-16 w-[19px] bg-[#cdcdcd]" />
              <span className="flex h-[29px] items-center pt-2"><Chevron /></span>
            </div>
          </div>
          <div className="flex flex-col justify-end gap-[14px] pb-[3px]">
            <Push wide>تحميل (L)</Push>
            <Push wide>حفظ (S)</Push>
          </div>
        </div>
        <div className="flex gap-[10px] pt-[7px] pl-px">
          <Push>إعادة الضبط</Push>
          <Push>إلغاء الأمر</Push>
          <Push primary>موافق</Push>
        </div>
      </div>
      <svg width="7" height="7" className="absolute right-[3px] bottom-0.5" fill="#bfbfbf" aria-hidden>
        <path d="M0 0h3v3H0zM4 0h3v3H4zM0 4h3v3H0zM4 4h3v3H4z" />
      </svg>
    </div>
  );
}

export default function App() {
  return (
    <div className={clsx("relative flex h-screen flex-col overflow-hidden bg-[#f0f0f0] text-black", ui)}>
      <header className="flex h-[25px] shrink-0 items-center gap-1 bg-white">
        <span className="h-5 w-[3px] rounded-r-sm bg-[#222]" />
        <h1 className="text-[14px] text-[#999]">55016521: XMGlobal-Real 44 - [EURUSD,H4]</h1>
      </header>
      <nav className="flex h-[25px] shrink-0 items-center text-[15px] text-[#a0a0a0]">
        <svg width="6" height="18" className="shrink-0" fill="none" aria-hidden>
          <path d="M0 1l3 6v3h2v7H0" stroke="#3b7fd0" strokeWidth="1.500" fill="#e6f1fd" />
        </svg>
        <div className="flex gap-[22px] pl-2">
          {menus.map((m) => (
            <button key={m} dir="rtl" className="whitespace-nowrap">{m}</button>
          ))}
        </div>
      </nav>
      <Toolbars />
      <main className="flex h-[480px] shrink-0">
        <div className="flex w-[311px] shrink-0 flex-col">
          <MarketWatch />
          <Navigator />
        </div>
        <div className="w-[5px] border-x border-[#a0a0a0] border-l-white" />
        <Chart />
      </main>
      <Mailbox />
      <ExpertDialog />
    </div>
  );
}
